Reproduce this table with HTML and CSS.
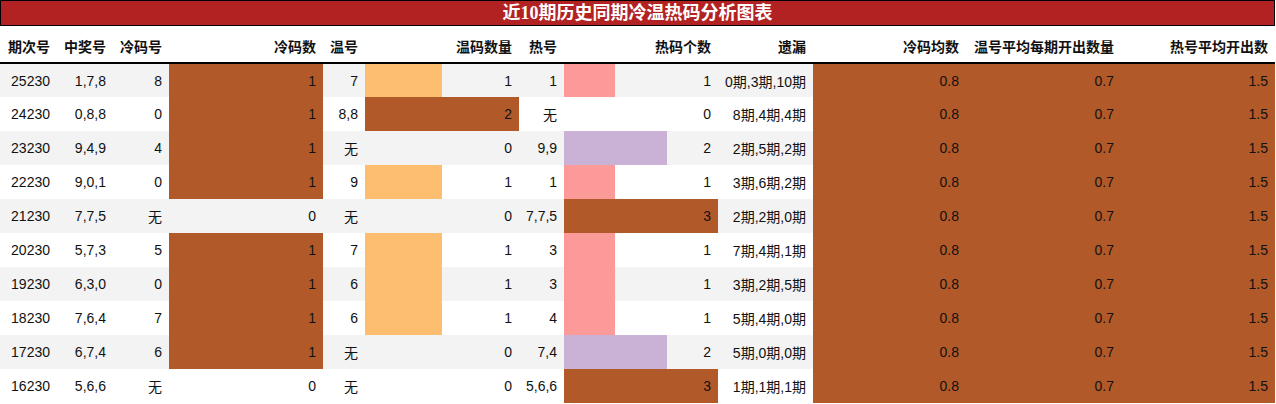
FILE: index.html
```html
<!DOCTYPE html>
<html lang="zh">
<head>
<meta charset="utf-8">
<title>近10期历史同期冷温热码分析图表</title>
<link rel="stylesheet" href="styles.css">
</head>
<body>
<div class="chart">
  <div class="title">近10期历史同期冷温热码分析图表</div>
  <table class="grid">
    <colgroup>
      <col class="w57"><col class="w56"><col class="w56"><col class="w154"><col class="w42"><col class="w154"><col class="w45"><col class="w154"><col class="w95"><col class="w153"><col class="w155"><col class="w154">
    </colgroup>
    <thead>
      <tr><th>期次号</th><th>中奖号</th><th>冷码号</th><th>冷码数</th><th>温号</th><th>温码数量</th><th>热号</th><th>热码个数</th><th>遗漏</th><th>冷码均数</th><th>温号平均每期开出数量</th><th>热号平均开出数</th></tr>
    </thead>
    <tbody>
      <tr><td>25230</td><td>1,7,8</td><td>8</td><td class="bar brown">1</td><td>7</td><td class="bar peach" style="--w:50%">1</td><td>1</td><td class="bar pink" style="--w:33.3%">1</td><td>0期,3期,10期</td><td class="bar brown">0.8</td><td class="bar brown">0.7</td><td class="bar brown">1.5</td></tr>
      <tr><td>24230</td><td>0,8,8</td><td>0</td><td class="bar brown">1</td><td>8,8</td><td class="bar brown">2</td><td>无</td><td>0</td><td>8期,4期,4期</td><td class="bar brown">0.8</td><td class="bar brown">0.7</td><td class="bar brown">1.5</td></tr>
      <tr><td>23230</td><td>9,4,9</td><td>4</td><td class="bar brown">1</td><td>无</td><td>0</td><td>9,9</td><td class="bar lilac" style="--w:66.7%">2</td><td>2期,5期,2期</td><td class="bar brown">0.8</td><td class="bar brown">0.7</td><td class="bar brown">1.5</td></tr>
      <tr><td>22230</td><td>9,0,1</td><td>0</td><td class="bar brown">1</td><td>9</td><td class="bar peach" style="--w:50%">1</td><td>1</td><td class="bar pink" style="--w:33.3%">1</td><td>3期,6期,2期</td><td class="bar brown">0.8</td><td class="bar brown">0.7</td><td class="bar brown">1.5</td></tr>
      <tr><td>21230</td><td>7,7,5</td><td>无</td><td>0</td><td>无</td><td>0</td><td>7,7,5</td><td class="bar brown">3</td><td>2期,2期,0期</td><td class="bar brown">0.8</td><td class="bar brown">0.7</td><td class="bar brown">1.5</td></tr>
      <tr><td>20230</td><td>5,7,3</td><td>5</td><td class="bar brown">1</td><td>7</td><td class="bar peach" style="--w:50%">1</td><td>3</td><td class="bar pink" style="--w:33.3%">1</td><td>7期,4期,1期</td><td class="bar brown">0.8</td><td class="bar brown">0.7</td><td class="bar brown">1.5</td></tr>
      <tr><td>19230</td><td>6,3,0</td><td>0</td><td class="bar brown">1</td><td>6</td><td class="bar peach" style="--w:50%">1</td><td>3</td><td class="bar pink" style="--w:33.3%">1</td><td>3期,2期,5期</td><td class="bar brown">0.8</td><td class="bar brown">0.7</td><td class="bar brown">1.5</td></tr>
      <tr><td>18230</td><td>7,6,4</td><td>7</td><td class="bar brown">1</td><td>6</td><td class="bar peach" style="--w:50%">1</td><td>4</td><td class="bar pink" style="--w:33.3%">1</td><td>5期,4期,0期</td><td class="bar brown">0.8</td><td class="bar brown">0.7</td><td class="bar brown">1.5</td></tr>
      <tr><td>17230</td><td>6,7,4</td><td>6</td><td class="bar brown">1</td><td>无</td><td>0</td><td>7,4</td><td class="bar lilac" style="--w:66.7%">2</td><td>5期,0期,0期</td><td class="bar brown">0.8</td><td class="bar brown">0.7</td><td class="bar brown">1.5</td></tr>
      <tr><td>16230</td><td>5,6,6</td><td>无</td><td>0</td><td>无</td><td>0</td><td>5,6,6</td><td class="bar brown">3</td><td>1期,1期,1期</td><td class="bar brown">0.8</td><td class="bar brown">0.7</td><td class="bar brown">1.5</td></tr>
    </tbody>
  </table>
</div>
</body>
</html>
```
FILE: styles.css
```css
html, body {
  margin: 0;
  padding: 0;
  background: #ffffff;
}
.chart {
  width: 1275px;
}
.title {
  box-sizing: border-box;
  height: 26px;
  border: 1px solid #000;
  background: #b22222;
  color: #ffffff;
  font-family: "Liberation Serif", "Noto Sans CJK SC", serif;
  font-weight: bold;
  font-size: 18px;
  line-height: 24px;
  text-align: center;
}
.grid {
  width: 1275px;
  border-collapse: collapse;
  table-layout: fixed;
  font-family: "Liberation Sans", "Noto Sans CJK SC", sans-serif;
  font-size: 14px;
  color: #111;
}
.w42 { width: 42px; }
.w45 { width: 45px; }
.w56 { width: 56px; }
.w57 { width: 57px; }
.w95 { width: 95px; }
.w153 { width: 153px; }
.w154 { width: 154px; }
.w155 { width: 155px; }
.grid th, .grid td {
  padding: 0 7px;
  text-align: right;
  white-space: nowrap;
  overflow: visible;
}
.grid th {
  height: 37px;
  font-weight: bold;
  color: #111;
  border-bottom: 2px solid #000;
  padding-top: 3px;
  box-sizing: border-box;
}
.grid td {
  height: 34px;
  box-sizing: border-box;
}
.grid tbody tr:nth-child(odd) {
  background: #f3f3f3;
}
.grid tbody tr:nth-child(even) {
  background: #ffffff;
}
.bar {
  --w: 100%;
  --c: #b15928;
  background: linear-gradient(to right, var(--c) var(--w), transparent var(--w));
}
.brown { --c: #b15928; }
.peach { --c: #fdbf6f; }
.pink { --c: #fb9a99; }
.lilac { --c: #cab2d6; }
```
